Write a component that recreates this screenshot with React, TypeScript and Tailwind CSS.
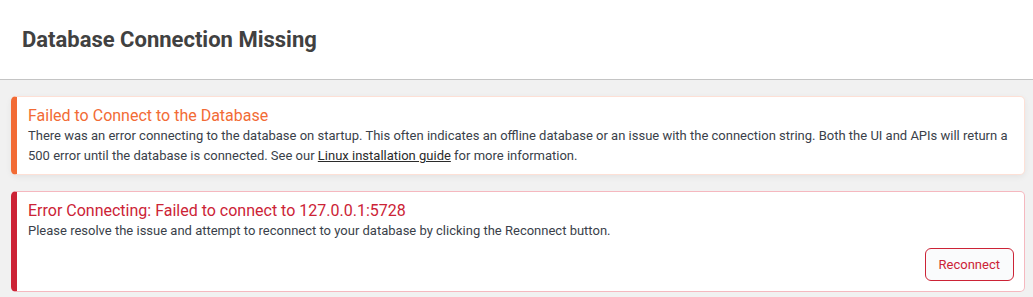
const App = () => {
	return (
		<div className="min-h-[297px] w-full bg-[#f1f1f1] font-['Roboto',sans-serif]">
			<div className="h-[80px] bg-white border-b border-[#c4c4c4] flex items-center px-[22px]">
				<h1 className="text-[22px] font-bold text-[#414141]">Database Connection Missing</h1>
			</div>

			<div className="pl-[11px] pr-[8px] pt-[16px] flex flex-col gap-[16px]">
				<div className="bg-white rounded-[5px] border border-[#fde0d6] border-l-[6px] border-l-[#f26b35] pl-[11px] pr-[12px] pt-[9px] pb-[8px] shadow-[0_2px_6px_rgba(0,0,0,0.06)]">
					<h2 className="text-[16px] leading-[20px] text-[#f26b35]">Failed to Connect to the Database</h2>
					<p className="text-[13px] leading-[20px] text-[#3a3f4a]">
						There was an error connecting to the database on startup. This often indicates an offline database or an issue with
						the connection string. Both the UI and APIs will return a 500 error until the database is connected. See our{" "}
						<a className="underline text-[#2b2b2b]">Linux installation guide</a> for more information.
					</p>
				</div>

				<div className="bg-white rounded-[5px] border border-[#f5b8bf] border-l-[6px] border-l-[#cc2336] pl-[11px] pr-[10px] pt-[9px] pb-[10px]">
					<h2 className="text-[16px] leading-[20px] text-[#cc2336]">Error Connecting: Failed to connect to 127.0.0.1:5728</h2>
					<p className="text-[13px] leading-[20px] text-[#3a3f4a]">
						Please resolve the issue and attempt to reconnect to your database by clicking the Reconnect button.
					</p>
					<div className="flex justify-end mt-[7px]">
						<button className="h-[33px] px-[13px] rounded-[6px] border border-[#cc2336] bg-[#fafbfc] text-[13px] text-[#cc2336]">
							Reconnect
						</button>
					</div>
				</div>
			</div>
		</div>
	);
};

export default App;
